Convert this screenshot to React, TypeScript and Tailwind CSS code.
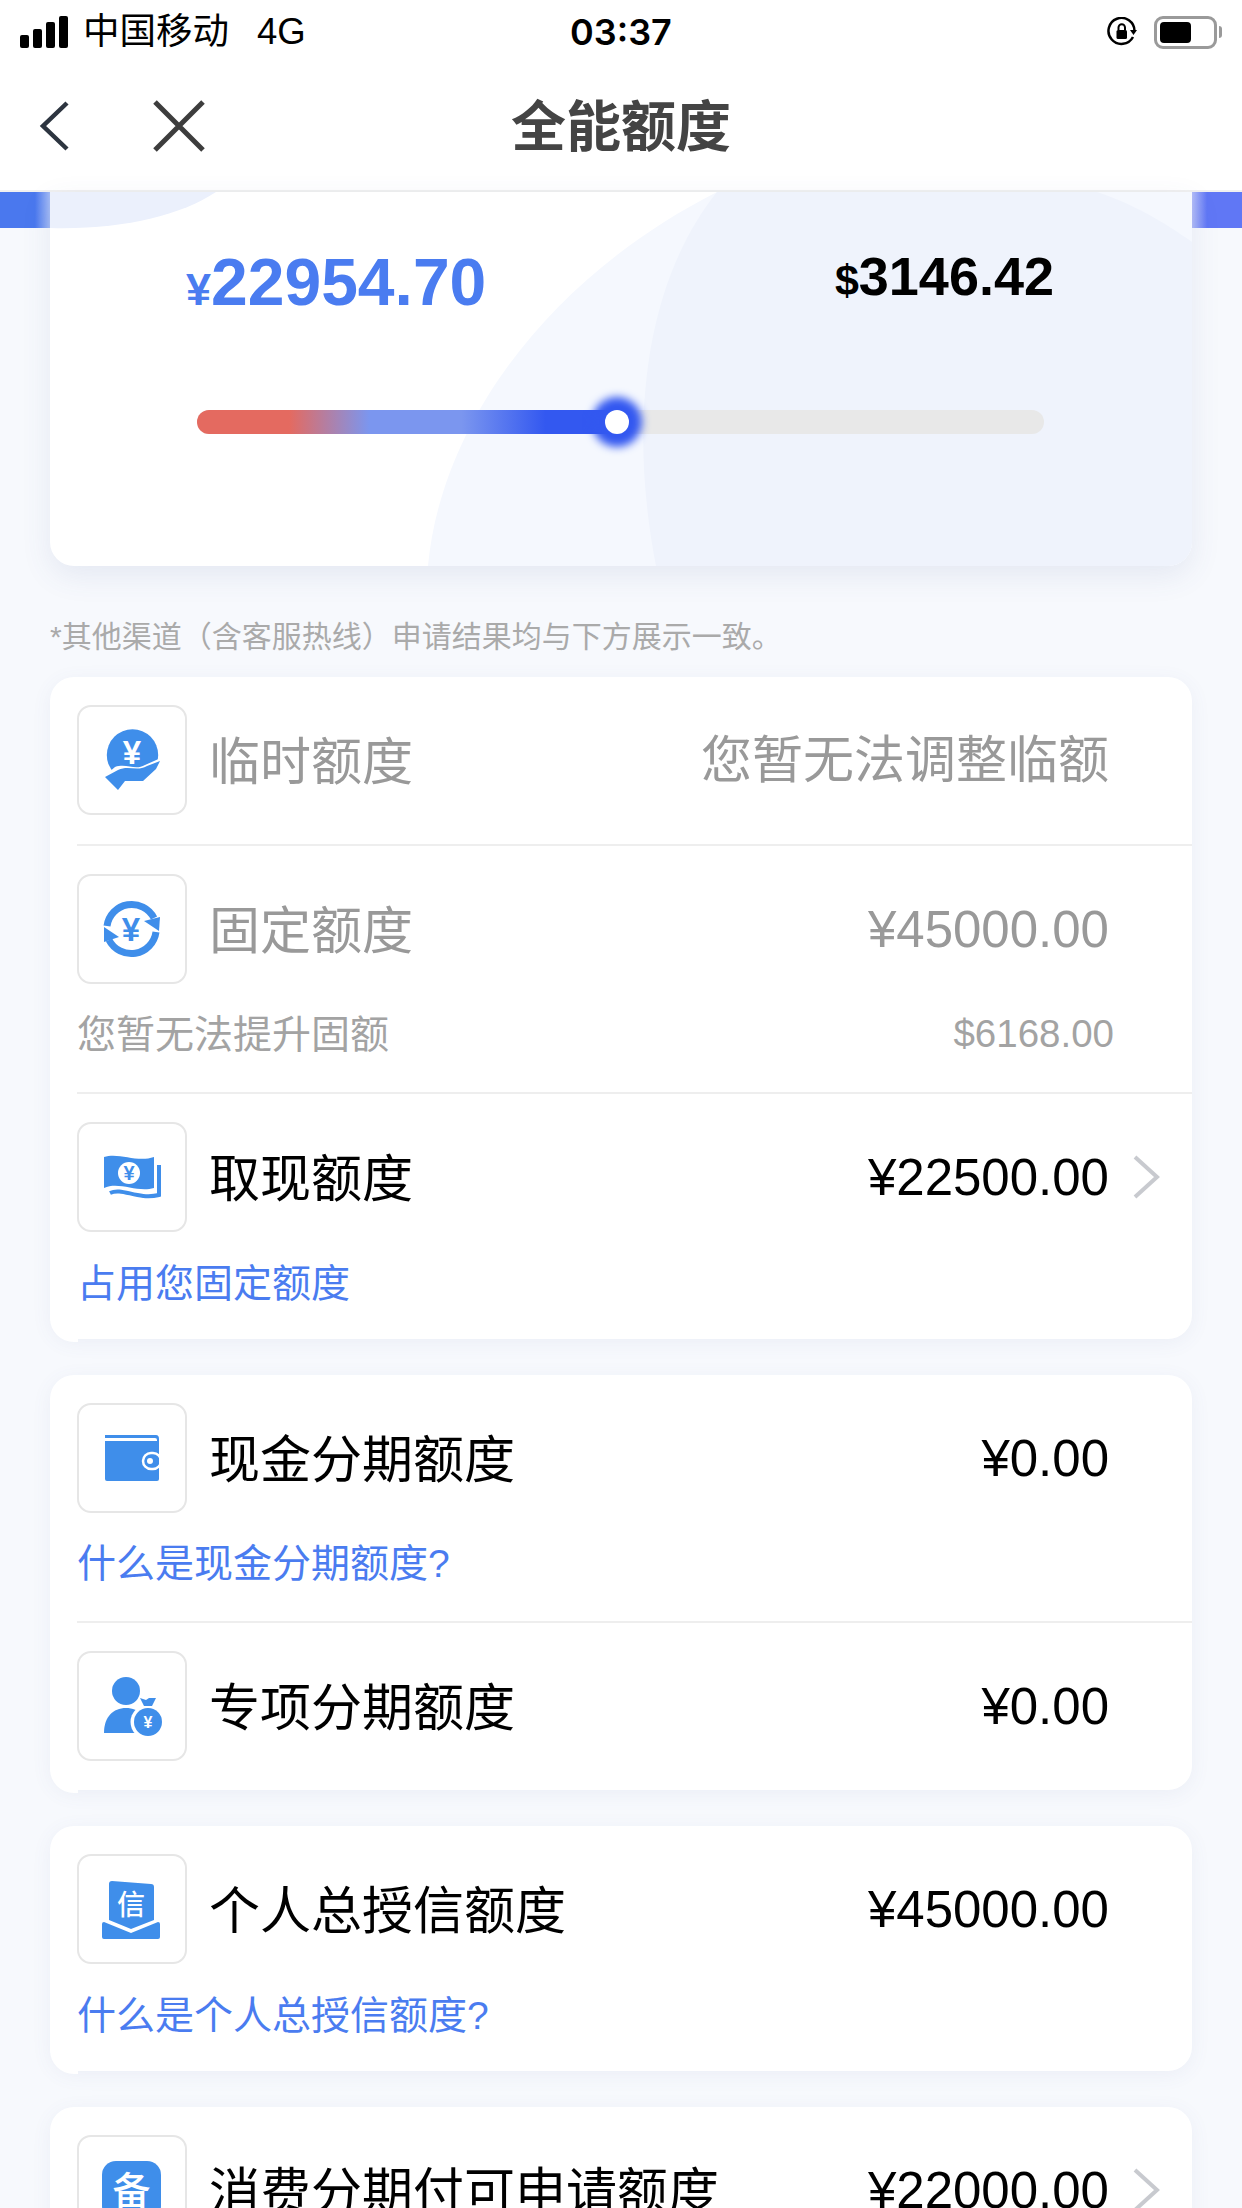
import type { ReactNode } from 'react';

const ICON_BLUE = '#3f8eea';

function YenText({ x, y, size, fill }: { x: number; y: number; size: number; fill: string }) {
  return (
    <text x={x} y={y} fontSize={size} fontWeight={700} fill={fill} textAnchor="middle" fontFamily="'Liberation Sans', sans-serif">
      ¥
    </text>
  );
}

function HandIcon() {
  return (
    <>
      <circle cx="55.5" cy="50" r="25.7" fill={ICON_BLUE} />
      <YenText x={55} y={59} size={33} fill="#fff" />
      <path d="M24 74 L38 62 C50 58 58 66 68 60 L86 52 L86 90 L24 90 Z" fill="#fff" />
      <path d="M28 72 L41 65 C52 60 60 67 70 61 L83 56 L79 64 L66 76 L48 76 L41 85 Z" fill={ICON_BLUE} />
    </>
  );
}

function CycleIcon() {
  return (
    <>
      <path d="M30 52 A25 25 0 0 1 77 44" fill="none" stroke={ICON_BLUE} strokeWidth="7" />
      <path d="M67 47 L83 43 L82 57 Z" fill={ICON_BLUE} />
      <path d="M79 58 A25 25 0 0 1 32 66" fill="none" stroke={ICON_BLUE} strokeWidth="7" />
      <path d="M42 63 L27 68 L27 53 Z" fill={ICON_BLUE} />
      <YenText x={54} y={67} size={33} fill={ICON_BLUE} />
    </>
  );
}

function MoneyIcon() {
  return (
    <>
      <path d="M27 35 C42 30 60 41 77 35 L77 66 C60 71 42 59 27 66 Z" fill={ICON_BLUE} />
      <circle cx="52" cy="51" r="11" fill="#fff" />
      <YenText x={52} y={58} size={20} fill={ICON_BLUE} />
      <path d="M33 71 C45 65 60 78 82 73 L82 43" fill="none" stroke={ICON_BLUE} strokeWidth="4" />
    </>
  );
}

function WalletIcon() {
  return (
    <>
      <path d="M28 32 H79 Q82 32 82 36 V38 H80 V37 Q80 35 78 35 H28 Z" fill={ICON_BLUE} />
      <path d="M28 38 H82 V76 Q82 78 80 78 H30 Q28 78 28 76 Z" fill={ICON_BLUE} />
      <rect x="66" y="50" width="18" height="16" rx="8" fill={ICON_BLUE} stroke="#fff" strokeWidth="2.5" />
      <rect x="82" y="48" width="4" height="20" fill="#fff" />
      <circle cx="73" cy="58" r="3" fill="#fff" />
    </>
  );
}

function PersonIcon() {
  return (
    <>
      <circle cx="49" cy="40" r="14" fill={ICON_BLUE} />
      <path d="M27 82 C27 66 36 57 49 57 C62 57 72 66 72 82 Z" fill={ICON_BLUE} />
      <circle cx="71" cy="71" r="17.5" fill="#fff" />
      <circle cx="71" cy="71" r="14" fill={ICON_BLUE} />
      <path d="M63 47 L69 49 L72 47 L79 47 L75 55 L67 55 Z" fill={ICON_BLUE} />
      <YenText x={71} y={77} size={16} fill="#fff" />
    </>
  );
}

function CreditIcon() {
  return (
    <>
      <path d="M32 30 Q32 27 35 27 L74 30 Q77 30 77 33 V66 L54 75 L32 66 Z" fill={ICON_BLUE} />
      <path d="M25 70 Q25 68 27 68 L54 79 L81 68 Q83 68 83 70 V83 Q83 85 81 85 H27 Q25 85 25 83 Z" fill={ICON_BLUE} />
      <text x="54" y="61" fontSize="28" fontWeight={500} fill="#fff" textAnchor="middle" fontFamily="'Noto Sans CJK SC', sans-serif">
        信
      </text>
    </>
  );
}

function BeiIcon() {
  return (
    <>
      <rect x="25" y="26" width="59" height="59" rx="14" fill={ICON_BLUE} />
      <text x="54.5" y="69" fontSize="38" fontWeight={500} fill="#fff" textAnchor="middle" fontFamily="'Noto Sans CJK SC', sans-serif">
        备
      </text>
    </>
  );
}

function IconBox({ children }: { children: ReactNode }) {
  return (
    <div className="h-[110px] w-[110px] shrink-0 rounded-[14px] border-2 border-[#e6e6e6] bg-white">
      <svg viewBox="2 2 106 106" className="h-full w-full">
        {children}
      </svg>
    </div>
  );
}

function Chevron() {
  return (
    <svg width="27" height="44" viewBox="0 0 27 44" fill="none">
      <path d="M2 2 L24 22 L2 42" stroke="#c8cacf" strokeWidth="4" />
    </svg>
  );
}

interface LimitRowProps {
  icon: ReactNode;
  label: string;
  value: string;
  muted?: boolean;
  chevron?: boolean;
  sub?: string;
  subValue?: string;
  link?: boolean;
  last?: boolean;
}

function LimitRow({ icon, label, value, muted, chevron, sub, subValue, link, last }: LimitRowProps) {
  const textColor = muted ? 'text-[#999999]' : 'text-black';
  const bottom = !sub ? 'pb-[29px]' : last ? 'pb-[31px]' : 'pb-[33px]';
  return (
    <div className={`ml-[27px] pt-[28px] ${last ? '' : 'border-b-2 border-[#eeeeee]'} ${bottom}`}>
      <div className="flex items-center">
        <IconBox>{icon}</IconBox>
        <span className={`ml-[22px] pt-[5px] text-[51px] leading-none ${textColor}`}>{label}</span>
        <span className={`ml-auto text-[51px] leading-none ${textColor}`}>{value}</span>
        <div className="flex w-[83px] shrink-0 justify-start pl-[24px]">{chevron && <Chevron />}</div>
      </div>
      {sub && (
        <div className={`${last ? 'mt-[26px]' : 'mt-[25px]'} flex h-[50px] items-center justify-between pr-[78px] text-[39px] leading-none`}>
          <span className={link ? 'text-[#4a7cf0]' : 'text-[#a3a3a3]'}>{sub}</span>
          {subValue && <span className="text-[38.5px] text-[#a3a3a3]">{subValue}</span>}
        </div>
      )}
    </div>
  );
}

function Card({ children }: { children: ReactNode }) {
  return (
    <div className="relative mx-[50px] mb-[36px] rounded-[24px] bg-white shadow-[0_4px_20px_rgba(80,100,160,0.07)]">
      <div className="absolute -bottom-[3px] left-0 h-[30px] w-[28px] rounded-bl-[24px] bg-white" />
      <div className="relative">{children}</div>
    </div>
  );
}

function StatusBar() {
  return (
    <div className="relative flex h-[64px] items-center text-[36.5px] leading-none text-black">
      <div className="ml-[20px] flex h-[32px] items-end gap-[4px]">
        <div className="h-[13px] w-[9px] rounded-[2px] bg-black" />
        <div className="h-[19px] w-[9px] rounded-[2px] bg-black" />
        <div className="h-[26px] w-[9px] rounded-[2px] bg-black" />
        <div className="h-[32px] w-[9px] rounded-[2px] bg-black" />
      </div>
      <span className="ml-[15px]">中国移动</span>
      <span className="ml-[28px]">4G</span>
      <span className="absolute left-[570px] font-['Inter'] text-[36px] font-semibold">03:37</span>
      <div className="ml-auto mr-[20px] flex items-center gap-[17px]">
        <svg width="30" height="30" viewBox="0 0 30 30" fill="none">
          <path d="M26 20 A13 13 0 1 1 27.5 14" stroke="#000" strokeWidth="2.5" />
          <path d="M23 13 L30 13 L26.5 18 Z" fill="#000" />
          <rect x="9.5" y="13" width="10.5" height="9" rx="1.5" fill="#000" />
          <path d="M11.5 13 V10.5 A3.2 3.2 0 0 1 18 10.5 V13" stroke="#000" strokeWidth="2" />
        </svg>
        <div className="flex items-center gap-[2px]">
          <div className="flex h-[33px] w-[63px] items-center rounded-[9px] border-[3px] border-[#9a9a9a] p-[3px]">
            <div className="h-[21px] w-[31px] rounded-[4px] bg-black" />
          </div>
          <div className="h-[12px] w-[3px] rounded-r-[3px] bg-[#9a9a9a]" />
        </div>
      </div>
    </div>
  );
}

function NavBar() {
  return (
    <div className="relative flex h-[128px] items-center justify-center border-b-2 border-[#f0f0f0]">
      <svg width="32" height="52" viewBox="0 0 32 52" fill="none" className="absolute left-[38px] top-[36px]">
        <path d="M29 3 L5 26 L29 49" stroke="#2d3540" strokeWidth="4.5" />
      </svg>
      <svg width="54" height="54" viewBox="0 0 54 54" fill="none" className="absolute left-[152px] top-[35px]">
        <path d="M3 3 L51 51 M51 3 L3 51" stroke="#3d3d3d" strokeWidth="5" />
      </svg>
      <span className="text-[55px] font-semibold leading-none text-[#444444]">全能额度</span>
    </div>
  );
}

function Hero() {
  return (
    <div className="relative mx-[50px] h-[374px] overflow-hidden rounded-b-[24px] bg-white shadow-[0_10px_30px_rgba(70,90,150,0.10)]">
      <svg viewBox="0 0 1142 374" className="absolute inset-0 h-full w-full">
        <path d="M0 0 H166 C130 24 70 38 0 36 Z" fill="#ebf0fc" />
        <path d="M378 374 C390 240 490 90 667 0 H1142 V374 Z" fill="#f5f8fe" />
        <path d="M606 374 C578 230 595 90 667 0 H1047 C1090 14 1125 38 1142 50 V374 Z" fill="#eff3fc" />
      </svg>
      <div className="relative flex items-start justify-between pl-[136px] pr-[138px] pt-[57px] font-bold leading-none">
        <div className="text-[#4a7cf0]">
          <span className="text-[45px]">¥</span>
          <span className="text-[66px]">22954.70</span>
        </div>
        <div className="text-black">
          <span className="text-[43px]">$</span>
          <span className="text-[54px]">3146.42</span>
        </div>
      </div>
      <div className="relative ml-[147px] mt-[95px] h-[24px] w-[847px] rounded-full bg-[#e8e8e8]">
        <div className="h-full w-[420px] rounded-l-full bg-[linear-gradient(90deg,#e46a60_22%,#7b96ef_41%,#7b96ef_63%,#3358f0_83%)]" />
        <div className="absolute left-[408px] top-0 h-[24px] w-[24px] rounded-full bg-white shadow-[0_0_9px_13px_#3358f0]" />
      </div>
    </div>
  );
}

export default function App() {
  return (
    <div className="relative h-[2208px] w-[1242px] overflow-hidden bg-[#f7f9fd] font-['Liberation_Sans','Noto_Sans_CJK_SC',sans-serif]">
      <div className="bg-white">
        <StatusBar />
        <NavBar />
      </div>

      {/* blue band behind the hero, only its ends show */}
      <div className="absolute left-0 top-[192px] h-[36px] w-[50px] bg-[linear-gradient(90deg,#4a78ee_70%,#a4bbf5)]" />
      <div className="absolute right-0 top-[192px] h-[36px] w-[50px] bg-[linear-gradient(90deg,#b3bdf8,#6077f5_30%)]" />

      <Hero />

      <p className="ml-[50px] mt-[52px] text-[30px] leading-[38px] text-[#aaaaaa]">*其他渠道（含客服热线）申请结果均与下方展示一致。</p>

      <div className="mt-[21px]">
        <Card>
          <LimitRow icon={<HandIcon />} label="临时额度" value="您暂无法调整临额" muted />
          <LimitRow icon={<CycleIcon />} label="固定额度" value="¥45000.00" muted sub="您暂无法提升固额" subValue="$6168.00" />
          <LimitRow icon={<MoneyIcon />} label="取现额度" value="¥22500.00" chevron sub="占用您固定额度" link last />
        </Card>
        <Card>
          <LimitRow icon={<WalletIcon />} label="现金分期额度" value="¥0.00" sub="什么是现金分期额度?" link />
          <LimitRow icon={<PersonIcon />} label="专项分期额度" value="¥0.00" last />
        </Card>
        <Card>
          <LimitRow icon={<CreditIcon />} label="个人总授信额度" value="¥45000.00" sub="什么是个人总授信额度?" link last />
        </Card>
        <Card>
          <LimitRow icon={<BeiIcon />} label="消费分期付可申请额度" value="¥22000.00" chevron last />
        </Card>
      </div>
    </div>
  );
}
